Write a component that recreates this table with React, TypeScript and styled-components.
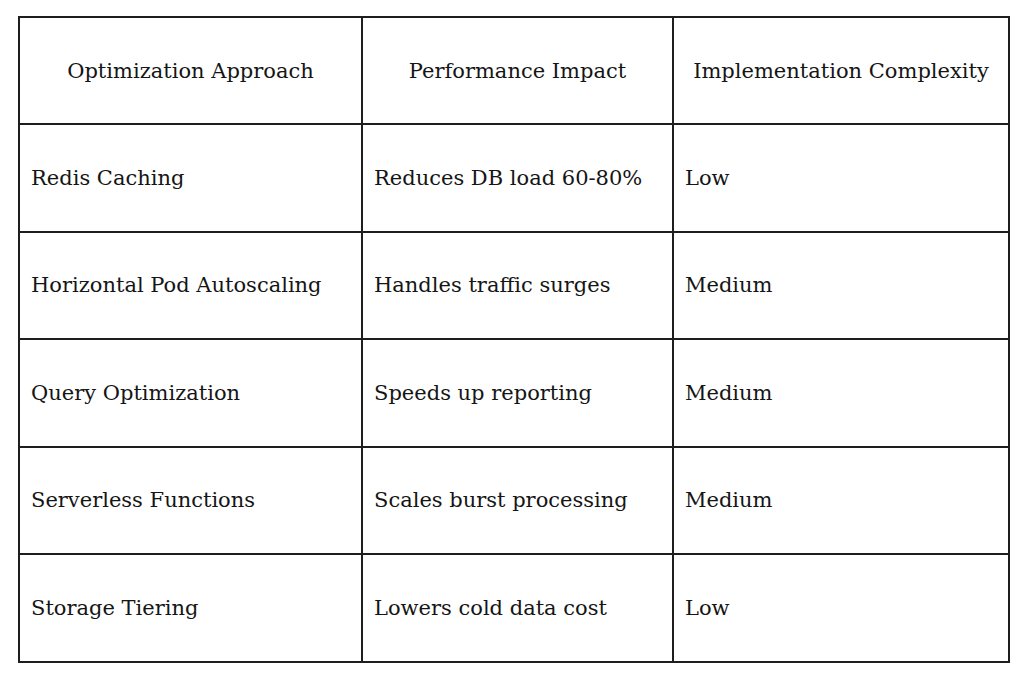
import { createGlobalStyle } from "styled-components";
import styled from "styled-components";

const GlobalStyle = createGlobalStyle`
  html, body {
    margin: 0;
    padding: 0;
    background: #ffffff;
  }
`;

const Page = styled.div`
  padding: 16px 0 0 18px;
  font-family: "DejaVu Serif", "Liberation Serif", serif;
  color: #151515;
`;

const Table = styled.table`
  border-collapse: collapse;
  table-layout: fixed;
  width: 990px;
`;

const HeadCell = styled.th<{ $w: number }>`
  box-sizing: border-box;
  width: ${({ $w }) => $w}px;
  height: 107px;
  border: 2px solid #1e1e1e;
  font-weight: 400;
  font-size: 21px;
  text-align: center;
  padding: 0 11px;
  white-space: nowrap;
`;

const Cell = styled.td`
  box-sizing: border-box;
  height: 107.5px;
  border: 2px solid #1e1e1e;
  font-size: 21px;
  padding: 0 11px;
  white-space: nowrap;
`;

const headers = [
  { label: "Optimization Approach", w: 343 },
  { label: "Performance Impact", w: 311 },
  { label: "Implementation Complexity", w: 336 },
];

const rows = [
  ["Redis Caching", "Reduces DB load 60-80%", "Low"],
  ["Horizontal Pod Autoscaling", "Handles traffic surges", "Medium"],
  ["Query Optimization", "Speeds up reporting", "Medium"],
  ["Serverless Functions", "Scales burst processing", "Medium"],
  ["Storage Tiering", "Lowers cold data cost", "Low"],
];

export default function App() {
  return (
    <>
      <GlobalStyle />
      <Page>
        <Table>
          <thead>
            <tr>
              {headers.map((h) => (
                <HeadCell key={h.label} $w={h.w}>
                  {h.label}
                </HeadCell>
              ))}
            </tr>
          </thead>
          <tbody>
            {rows.map((r) => (
              <tr key={r[0]}>
                {r.map((c, i) => (
                  <Cell key={i}>{c}</Cell>
                ))}
              </tr>
            ))}
          </tbody>
        </Table>
      </Page>
    </>
  );
}
